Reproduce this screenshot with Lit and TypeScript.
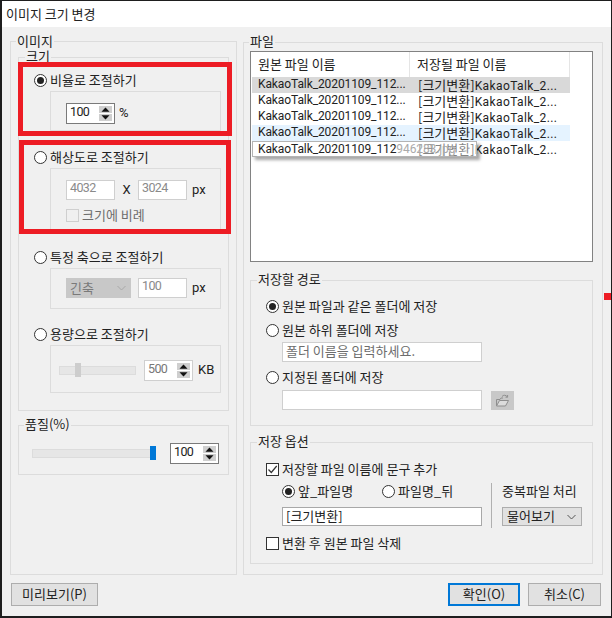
import { LitElement, html, css } from "lit";
import { customElement } from "lit/decorators.js";

const spinArrows = html`<svg class="spinbtn" width="13" height="15" viewBox="0 0 13 15">
  <rect x="0" y="0" width="13" height="7" fill="#cfcfcf"/>
  <rect x="0" y="8" width="13" height="7" fill="#cfcfcf"/>
  <path d="M6.5 1.5 L10.5 5.8 H2.5 Z" fill="#111"/>
  <path d="M2.5 9.3 H10.5 L6.5 13.6 Z" fill="#111"/>
</svg>`;

const chevron = (c: string) => html`<svg class="chev" width="9" height="6" viewBox="0 0 9 6">
  <path d="M0.5 1 L4.5 5 L8.5 1" fill="none" stroke="${c}" stroke-width="1"/>
</svg>`;

@customElement("app-root")
export class AppRoot extends LitElement {
  static styles = css`
    :host {
      display: block;
      width: 612px;
      height: 618px;
      font-family: "Noto Sans CJK KR", "Noto Sans", sans-serif;
      font-size: 13px;
      color: #222;
    }
    * { box-sizing: border-box; }
    .win {
      position: relative;
      width: 612px;
      height: 618px;
      background: #f0f0f0;
      border-style: solid;
      border-color: #1e1e1e;
      border-width: 1px 1px 2px 2px;
      overflow: hidden;
    }
    .title {
      height: 26px;
      background: #fff;
      padding-left: 4px;
      line-height: 25px;
    }
    .cols {
      display: grid;
      grid-template-columns: 227px 360px;
      column-gap: 6px;
      padding: 14px 0 0 8px;
      height: 556px;
      align-items: start;
    }
    .group { border: 1px solid #dcdcdc; }
    .legend {
      display: block;
      width: fit-content;
      height: 18px;
      line-height: 16px;
      margin: -10px 0 0 5px;
      padding: 0 1px;
      background: #f0f0f0;
    }
    .legend.inset { margin-left: -9px; }
    .legend.first { line-height: 17px; }
    .image-group { height: 534px; }
    .size-group { width: 211px; height: 354px; margin: 7px 0 0 7px; padding-left: 15px; }
    .quality-group { width: 211px; height: 50px; margin: 14px 0 0 7px; }
    .file-group { height: 533px; margin-top: 1px; }

    .radio-row, .check-row {
      display: flex;
      align-items: center;
      height: 18px;
      gap: 3px;
    }
    .radio-row > span:last-child, .check-row > span:last-child {
      line-height: 17px;
      padding-bottom: 1px;
    }
    .radio {
      width: 13px;
      height: 13px;
      flex: none;
      border: 1px solid #333;
      border-radius: 50%;
      background: #fff;
      display: flex;
      align-items: center;
      justify-content: center;
    }
    .radio.on::after {
      content: "";
      width: 7px;
      height: 7px;
      border-radius: 50%;
      background: #222;
    }
    .check {
      width: 13px;
      height: 13px;
      flex: none;
      border: 1px solid #333;
      background: #fff;
      display: flex;
    }
    .check.dis { border-color: #cfcfcf; background: #f0f0f0; }

    .sub {
      width: 171px;
      margin: 2px 0 0 16px;
      border: 1px solid #dcdcdc;
      padding-left: 15px;
    }
    .o1 { margin-top: 5px; }
    .o2 { margin-top: 17px; }
    .o3 { margin-top: 18px; }
    .o4 { margin-top: 16px; }
    .s1 { height: 40px; padding-top: 11px; }
    .s2 { height: 62px; padding-top: 11px; }
    .s3 { height: 41px; padding-top: 9px; }
    .s4 { height: 48px; padding-top: 14px; padding-left: 8px; }

    .ctrl-row { display: flex; align-items: center; }
    .num {
      font-family: Roboto, "Noto Sans", sans-serif;
      font-size: 12.5px;
      letter-spacing: -0.6px;
    }
    .unit-text {
      font-family: Roboto, "Noto Sans", sans-serif;
      font-size: 13px;
      line-height: 15px;
      padding-bottom: 2px;
    }
    .field {
      width: 49px;
      height: 20px;
      background: #fff;
      border: 1px solid #cfcfcf;
      padding-left: 3px;
      line-height: 14px;
      flex: none;
      color: #8a8a8a;
    }
    .spin {
      width: 49px;
      height: 21px;
      background: #fff;
      border: 1px solid #7a7a7a;
      padding: 2px 2px 0 3px;
      display: flex;
      justify-content: space-between;
      line-height: 12px;
      flex: none;
    }
    .spin.dis { border-color: #cfcfcf; color: #777; }
    .spinbtn { flex: none; }
    .unit-pct { margin-left: 4px; }
    .x { width: 23px; text-align: center; }
    .unit { margin-left: 5px; }
    .chk-sub { margin-top: 6px; color: #6d6d6d; }
    .select {
      display: flex;
      align-items: center;
      justify-content: space-between;
      flex: none;
      padding: 0 5px 2px 4px;
    }
    .chev { margin-top: 2px; }
    .select.axis { width: 65px; height: 20px; background: #c8c8c8; color: #7a7a7a; margin-right: 7px; }
    .select.dup { width: 80px; height: 19px; margin-top: 9px; background: #e1e1e1; border: 1px solid #adadad; }

    .slider {
      position: relative;
      height: 9px;
      background: #e6e6e6;
      border: 1px solid #dcdcdc;
      flex: none;
    }
    .thumb {
      position: absolute;
      top: -4px;
      width: 6px;
      height: 14px;
      background: #cdcdcd;
    }
    .thumb.blue { background: #0078d7; }
    .s4 .slider { width: 77px; margin-right: 8px; }
    .q-row { padding: 8px 0 0 13px; height: 30px; }
    .q-row .slider { width: 123px; margin-right: 15px; }

    .list {
      position: relative;
      width: 343px;
      height: 211px;
      margin: 0 0 0 6px;
      background: #fff;
      border: 1px solid #828282;
      padding-left: 1px;
    }
    .lh { display: flex; height: 25px; }
    .lh div { border-right: 1px solid #e5e5e5; line-height: 24px; }
    .lh .c1 { width: 158px; padding-left: 6px; }
    .lh .c2 { width: 160px; padding-left: 7px; }
    .lr {
      display: grid;
      grid-template-columns: 160px 158px;
      width: 318px;
      height: 16px;
      line-height: 15px;
      white-space: nowrap;
    }
    .lr > span { padding-left: 6px; }
    .lr.sel { background: #d9d9d9; }
    .lr.hov { background: #e5f3ff; }
    .lat {
      font-family: Roboto, "Noto Sans", sans-serif;
      font-size: 12px;
      letter-spacing: -0.1px;
    }
    .lat2 {
      font-family: Roboto, "Noto Sans", sans-serif;
      font-size: 12px;
      letter-spacing: 0.4px;
    }
    .tip {
      position: absolute;
      left: 1px;
      top: 89px;
      width: 225px;
      height: 16px;
      line-height: 14px;
      padding-left: 5px;
      white-space: nowrap;
      border: 1px solid #b4b4b4;
      background: rgba(255,255,255,0.45);
      box-shadow: 3px 3px 3px rgba(0,0,0,0.35);
      overflow: hidden;
    }
    .tip i { font-style: normal; color: #aaa; }

    .path-group, .opt-group {
      width: 343px;
      margin: 18px 0 0 6px;
      padding-left: 15px;
    }
    .path-group { height: 146px; }
    .opt-group { height: 122px; margin-top: 16px; }
    .mt8 { margin-top: 8px; }
    .mt6 { margin-top: 6px; }
    .mt9 { margin-top: 9px; }
    .mt4 { margin-top: 4px; }
    .wide {
      width: 200px;
      height: 20px;
      margin: 3px 0 0 16px;
      background: #fff;
      border: 1px solid #cfcfcf;
      padding-left: 3px;
      line-height: 16px;
      color: #6d6d6d;
      flex: none;
    }
    .path-row { display: flex; align-items: flex-start; margin-top: 4px; }
    .path-row .wide { margin-top: 0; }
    .folder {
      width: 23px;
      height: 19px;
      margin: 1px 0 0 9px;
      background: #c8c8c8;
      display: flex;
      align-items: center;
      justify-content: center;
    }
    .mid {
      display: grid;
      grid-template-columns: 209px 1fr;
      margin-top: 4px;
      height: 48px;
      margin-left: 16px;
    }
    .mid-left .radios { display: flex; height: 18px; }
    .mid-left .radio-row { width: 100px; }
    .mid-left .wide { margin: 7px 0 0 0; height: 19px; color: #222; border-color: #a8a8a8; line-height: 15px; }
    .mid-right {
      border-left: 1px solid #b0b0b0;
      margin-top: 1px;
      height: 45px;
      padding-left: 10px;
    }
    .lbl { height: 15px; line-height: 15px; white-space: nowrap; }

    .footer {
      display: flex;
      justify-content: space-between;
      padding: 0 10px 0 9px;
      height: 23px;
    }
    .right { display: flex; gap: 8px; }
    .btn {
      height: 23px;
      background: #e1e1e1;
      border: 1px solid #adadad;
      text-align: center;
      line-height: 19px;
    }
    .btn.prev { width: 87px; }
    .btn.ok { width: 72px; border: 2px solid #0078d7; line-height: 17px; }
    .btn.cancel { width: 73px; }

    .hl {
      position: absolute;
      border: 5px solid #ed1c24;
      pointer-events: none;
    }
    .hl1 { left: 16px; top: 61px; width: 214px; height: 74px; }
    .hl2 { left: 17px; top: 139px; width: 212px; height: 94px; }
    .mark {
      position: absolute;
      left: 602px;
      top: 292px;
      width: 8px;
      height: 7px;
      background: #ed1c24;
    }
  `;

  private radio(label: string, on = false) {
    return html`<div class="radio-row"><span class="radio ${on ? "on" : ""}"></span><span>${label}</span></div>`;
  }

  private spin(v: string, dis = false) {
    return html`<div class="spin ${dis ? "dis" : ""}"><span class="num">${v}</span>${spinArrows}</div>`;
  }

  private row(cls = "", first = true) {
    return html`<div class="lr ${cls}"><span class="lat">${first ? "KakaoTalk_20201109_112..." : ""}</span><span>[크기변환]<span class="lat2">KakaoTalk_2...</span></span></div>`;
  }

  render() {
    return html`<div class="win">
      <div class="title">이미지 크기 변경</div>
      <div class="cols">
        <section class="group image-group">
          <span class="legend first">이미지</span>
          <div class="group size-group">
            <span class="legend inset">크기</span>
            <div class="o1">${this.radio("비율로 조절하기", true)}</div>
            <div class="sub s1">
              <div class="ctrl-row">${this.spin("100")}<span class="unit-text unit-pct">%</span></div>
            </div>
            <div class="o2">${this.radio("해상도로 조절하기")}</div>
            <div class="sub s2">
              <div class="ctrl-row">
                <div class="field num">4032</div><span class="x unit-text">X</span><div class="field num">3024</div><span class="unit unit-text">px</span>
              </div>
              <div class="check-row chk-sub"><span class="check dis"></span><span>크기에 비례</span></div>
            </div>
            <div class="o3">${this.radio("특정 축으로 조절하기")}</div>
            <div class="sub s3">
              <div class="ctrl-row">
                <div class="select axis"><span>긴축</span>${chevron("#a8a8a8")}</div>
                <div class="field num">100</div><span class="unit unit-text">px</span>
              </div>
            </div>
            <div class="o4">${this.radio("용량으로 조절하기")}</div>
            <div class="sub s4">
              <div class="ctrl-row">
                <div class="slider"><span class="thumb" style="left:15px"></span></div>
                ${this.spin("500", true)}<span class="unit unit-text">KB</span>
              </div>
            </div>
          </div>
          <div class="group quality-group">
            <span class="legend">품질(%)</span>
            <div class="ctrl-row q-row">
              <div class="slider"><span class="thumb blue" style="left:117px"></span></div>
              ${this.spin("100")}
            </div>
          </div>
        </section>

        <section class="group file-group">
          <span class="legend">파일</span>
          <div class="list">
            <div class="lh"><div class="c1">원본 파일 이름</div><div class="c2">저장될 파일 이름</div></div>
            ${this.row("sel")}${this.row()}${this.row()}${this.row("hov")}${this.row("", false)}
            <div class="tip lat">KakaoTalk_20201109_112<i>946283.jpg</i></div>
          </div>
          <div class="group path-group">
            <span class="legend inset">저장할 경로</span>
            <div class="mt8">${this.radio("원본 파일과 같은 폴더에 저장", true)}</div>
            <div class="mt6">${this.radio("원본 하위 폴더에 저장")}</div>
            <div class="wide">폴더 이름을 입력하세요.</div>
            <div class="mt6">${this.radio("지정된 폴더에 저장")}</div>
            <div class="path-row">
              <div class="wide"></div>
              <div class="folder">
                <svg width="15" height="13" viewBox="0 0 15 13" fill="none" stroke="#8e8e8e" stroke-width="1">
                  <path d="M1.5 12 V5.5 H5 L6 4 H8" />
                  <path d="M1.5 12 H10.5 L13.5 6.5 H4.5 L1.5 12" fill="#dcdcdc"/>
                  <path d="M7 2.5 C8.5 0.8 10.8 0.8 12.2 2.8 M12.6 1 V3.2 H10.5" />
                </svg>
              </div>
            </div>
          </div>
          <div class="group opt-group">
            <span class="legend inset">저장 옵션</span>
            <div class="check-row mt9">
              <span class="check">
                <svg width="11" height="11" viewBox="0 0 11 11"><path d="M1.5 5.5 L4.3 8.5 L9.7 2" fill="none" stroke="#333" stroke-width="1.2"/></svg>
              </span>
              <span>저장할 파일 이름에 문구 추가</span>
            </div>
            <div class="mid">
              <div class="mid-left">
                <div class="radios">${this.radio("앞_파일명", true)}${this.radio("파일명_뒤")}</div>
                <div class="wide">[크기변환]</div>
              </div>
              <div class="mid-right">
                <div class="lbl">중복파일 처리</div>
                <div class="select dup"><span>물어보기</span>${chevron("#555")}</div>
              </div>
            </div>
            <div class="check-row mt4"><span class="check"></span><span>변환 후 원본 파일 삭제</span></div>
          </div>
        </section>
      </div>
      <div class="footer">
        <div class="btn prev">미리보기(P)</div>
        <div class="right">
          <div class="btn ok">확인(O)</div>
          <div class="btn cancel">취소(C)</div>
        </div>
      </div>
      <div class="hl hl1"></div>
      <div class="hl hl2"></div>
      <div class="mark"></div>
    </div>`;
  }
}
